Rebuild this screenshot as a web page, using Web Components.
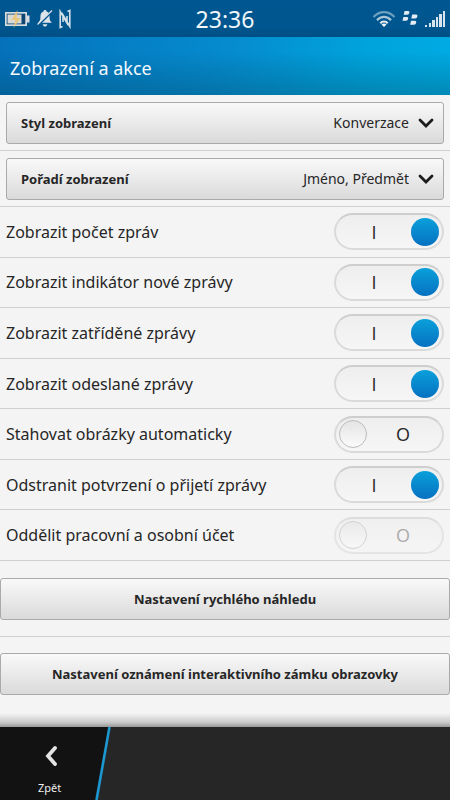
<!DOCTYPE html>
<html lang="cs">
<head>
<meta charset="utf-8">
<meta name="viewport" content="width=device-width, initial-scale=1">
<title>Zobrazení a akce</title>
<style>
body { margin: 0; font-family: "Noto Sans", "Open Sans", sans-serif; color: #262626; background: #f4f4f4; }
</style>
</head>
<body>
<settings-screen></settings-screen>
<script>
const define = (name, html, setup) => {
  const template = document.createElement('template');
  template.innerHTML = html;
  customElements.define(name, class extends HTMLElement {
    constructor() {
      super();
      this.attachShadow({ mode: 'open' }).append(template.content.cloneNode(true));
    }
    connectedCallback() { if (setup) setup(this, this.shadowRoot); }
  });
};

define('status-bar', `
<style>
:host { display: grid; grid-template-columns: 1fr auto 1fr; align-items: center; height: 37px; padding: 0 4px; background: linear-gradient(#005690, #00578f 70%, #004f85); color: #f0f6fa; font-size: 23px; line-height: 36px; }
.side { display: flex; align-items: center; gap: 6px; }
.right { justify-content: flex-end; }
svg { display: block; }
</style>
<div class="side">
  <svg width="27" height="18" viewBox="0 0 27 18" aria-label="Baterie"><path d="M1 2h22v3.500h2.500v7H23V16H1z" fill="#d5dce0"/><path d="M2.700 3.700h18.600v10.600H2.700z" fill="#0d4670"/><path d="M3.500 4.500h14v9h-14z" fill="#d9dad6"/><path d="M13.500 0 7.500 10h4l-2 8 7-10h-4z" fill="#e6c77c"/></svg>
  <svg width="16" height="19" viewBox="0 0 16 19" aria-label="Ztlumeno"><path d="M8 1c-1 0-1.500.7-1.500 1.600C3.500 3.500 3.500 6 3.400 9c0 2-1 3.500-2.400 4.800h14c-1.400-1.300-2.400-2.800-2.400-4.800-.1-3-.1-5.500-3.100-6.400C9.500 1.700 9 1 8 1zM5.700 15.200h4.600C10 16.600 9 17.500 8 17.500s-2-.9-2.300-2.300z" fill="#dce4e9"/><path d="M1 16.500 15 2.500" stroke="#00568f" stroke-width="2.200"/><path d="M.5 15.500 15 1.500" stroke="#dce4e9" stroke-width="1.200"/></svg>
  <svg width="12" height="20" viewBox="0 0 12 20" aria-label="NFC"><path d="M3.500 17.500 1.200 18.500V2.500L8 14V7M8.500 2.500l2.300-1v16L4 6v7" fill="none" stroke="#d3dfe7" stroke-width="1.600"/></svg>
</div>
<time>23:36</time>
<div class="side right">
  <svg width="24" height="18" viewBox="0 0 24 18" fill="none" stroke-width="2.200" aria-label="Wi-Fi"><path d="M1.500 7c6-6.500 15-6.500 21 0" stroke="#6d9fc0"/><path d="M5 10.300c4-4.500 10-4.500 14 0" stroke="#a9c6d9"/><path d="M8.300 13.300c2.200-2.400 5.200-2.400 7.400 0" stroke="#e4edf3"/><path d="m9.500 14.500 2.500 2.500 2.500-2.500c-1.500-1.300-3.500-1.300-5 0z" fill="#f0f6fa"/></svg>
  <svg width="17" height="17" viewBox="0 0 17 17" fill="#e4edf3" aria-label="BlackBerry"><path d="M2.600 1h3.600q1.600 0 1.200 1.800T5.200 4.800H1.700zM1.400 7h3.600q1.600 0 1.200 1.800T4 10.800H.5zM10.200 4.500h4q1.600 0 1.200 1.900t-2.200 2H9.300zM9 10.800h4q1.600 0 1.200 1.900t-2.200 2H8.100z"/></svg>
  <svg width="21" height="18" viewBox="0 0 21 18" fill="#d8e5ee" aria-label="Signál"><path d="M0 15h2v2H0zM4 13h2v4H4zM7 10h3v7H7zM11 7h2v10h-2zM14 4h3v13h-3zM18 1h2v16h-2z"/></svg>
</div>`);

define('title-bar', `
<style>
:host { display: flex; align-items: center; height: 58px; padding: 0 10px; color: #f4faff; background: linear-gradient(rgba(0,40,80,0) 25%, rgba(0,60,80,.3)), linear-gradient(100deg, #0571bb, #058bce 50%, #00a3dc 80%, #00abe3); }
h1 { margin: 0; padding-top: 4px; font-size: 18px; line-height: 28px; font-weight: 400; }
</style>
<h1><slot></slot></h1>`);

define('option-picker', `
<style>
:host { display: block; padding: 7px 6px 6px; border-bottom: 1px solid #cfcfcf; }
.box { display: grid; align-items: center; height: 42px; box-sizing: border-box; border: 1px solid #aaa; border-radius: 3px; background: linear-gradient(#f9f9f9, #dadada); font-size: 13px; line-height: 20px; }
label, select, svg { grid-area: 1 / 1; }
label { padding-left: 14px; font-weight: 700; pointer-events: none; z-index: 1; justify-self: start; }
select { appearance: none; width: 100%; height: 100%; border: 0; padding: 0 34px 0 180px; margin: 0; background: none; font: inherit; font-size: 14px; color: inherit; text-align-last: right; }
svg { justify-self: end; margin-right: 9px; pointer-events: none; }
</style>
<div class="box">
  <label for="s"></label>
  <select id="s"><option></option></select>
  <svg width="16" height="12" viewBox="0 0 16 12" aria-hidden="true"><path d="m2 3 6 6 6-6" fill="none" stroke="#1b1b1b" stroke-width="2.800" stroke-linecap="round"/></svg>
</div>`, (host, root) => {
  root.querySelector('label').textContent = host.getAttribute('label');
  root.querySelector('option').textContent = host.getAttribute('value');
});

define('toggle-row', `
<style>
:host { display: flex; flex: 1 0 50px; align-items: stretch; box-sizing: border-box; border-bottom: 1px solid #cfcfcf; }
label { flex: 1; display: flex; align-items: center; justify-content: space-between; padding: 0 6px; font-size: 16px; line-height: 24px; }
.switch { display: grid; align-items: center; width: 110px; height: 37px; }
input, .state { grid-area: 1 / 1; }
input { appearance: none; display: flex; align-items: center; box-sizing: border-box; width: 100%; height: 100%; margin: 0; padding: 0 3px; border: 2px solid #dadada; border-top-color: #cecece; border-radius: 19px; background: linear-gradient(#eee, #f6f6f6); }
input::before { content: ""; box-sizing: border-box; width: 28px; height: 28px; border-radius: 50%; border: 1px solid #bcbcbc; background: linear-gradient(#e4e4e4, #fbfbfb); }
input:checked { justify-content: flex-end; }
input:checked::before { border: 0; background: linear-gradient(#0aa0da, #0671c1); }
.state { z-index: 1; pointer-events: none; text-align: center; width: 80px; font-family: "Open Sans", sans-serif; font-size: 18px; }
.off { justify-self: end; width: 82px; }
input:disabled { opacity: .6; }
input:disabled + .state { opacity: .35; }
</style>
<label><slot></slot><span class="switch"><input type="checkbox" role="switch"><span class="state" aria-hidden="true"></span></span></label>`, (host, root) => {
  const input = root.querySelector('input'), state = root.querySelector('.state');
  input.checked = host.hasAttribute('checked');
  input.disabled = host.hasAttribute('disabled');
  input.setAttribute('aria-label', host.textContent);
  const update = () => {
    state.textContent = input.checked ? 'I' : 'O';
    state.classList.toggle('off', !input.checked);
  };
  input.addEventListener('change', update);
  update();
});

define('action-button', `
<style>
:host { display: block; }
button { width: 100%; height: 42px; padding: 0 8px; border: 1px solid #aaa; border-radius: 3px; background: linear-gradient(#f9f9f9, #dadada); font: inherit; font-size: 13px; line-height: 20px; font-weight: 700; color: inherit; }
</style>
<button type="button"><slot></slot></button>`);

define('action-bar', `
<style>
:host { display: flex; height: 73px; background: #262626; }
button { display: grid; width: 111px; padding: 0; border: 0; background: none; font: inherit; font-size: 11px; line-height: 16px; color: #eee; }
.shape, .face { grid-area: 1 / 1; }
.face { display: flex; flex-direction: column; align-items: center; gap: 14px; width: 99px; padding-top: 17px; }
.arrow { margin-left: 3px; }
</style>
<button type="button">
  <svg class="shape" width="111" height="73" viewBox="0 0 111 73" aria-hidden="true"><path d="M0 0h110L97 73H0z" fill="#121212"/><path d="M109.500 0 96.500 73" stroke="#1c97cf" stroke-width="2.600"/></svg>
  <span class="face"><svg class="arrow" width="14" height="22" viewBox="0 0 14 22" aria-hidden="true"><path d="m11 4-7 8 7 8" fill="none" stroke="#e4e4e4" stroke-width="3.800" stroke-linecap="round"/></svg><span><slot></slot></span></span>
</button>`);

define('settings-screen', `
<style>
:host { display: flex; flex-direction: column; min-height: 100vh; }
main { flex: 1; display: flex; flex-direction: column; background: linear-gradient(to top, #999, #ccc 5px, #f4f4f4 14px); }
.toggles { flex: 1; display: flex; flex-direction: column; }
.actions { padding: 17px 0 32px; }
hr { margin: 16px 0; border: 0; border-top: 1px solid #cfcfcf; }
</style>
<status-bar></status-bar>
<title-bar>Zobrazení a akce</title-bar>
<main>
  <option-picker label="Styl zobrazení" value="Konverzace"></option-picker>
  <option-picker label="Pořadí zobrazení" value="Jméno, Předmět"></option-picker>
  <div class="toggles">
    <toggle-row checked>Zobrazit počet zpráv</toggle-row>
    <toggle-row checked>Zobrazit indikátor nové zprávy</toggle-row>
    <toggle-row checked>Zobrazit zatříděné zprávy</toggle-row>
    <toggle-row checked>Zobrazit odeslané zprávy</toggle-row>
    <toggle-row>Stahovat obrázky automaticky</toggle-row>
    <toggle-row checked>Odstranit potvrzení o přijetí zprávy</toggle-row>
    <toggle-row disabled>Oddělit pracovní a osobní účet</toggle-row>
  </div>
  <div class="actions">
    <action-button>Nastavení rychlého náhledu</action-button>
    <hr>
    <action-button>Nastavení oznámení interaktivního zámku obrazovky</action-button>
  </div>
</main>
<action-bar>Zpět</action-bar>`);
</script>
</body>
</html>
